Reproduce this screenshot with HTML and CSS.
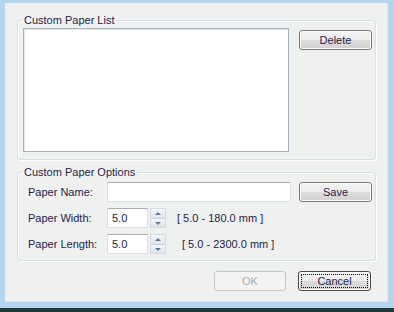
FILE: index.html
```html
<!DOCTYPE html>
<html lang="en">
<head>
    <meta charset="UTF-8">
    <meta name="viewport" content="width=device-width, initial-scale=1.0">
    <title>Custom Paper</title>
    <link rel="stylesheet" href="styles.css">
</head>
<body>

    <div class="window">
        <div class="dialog">

            <fieldset class="group">
                <legend>Custom Paper List</legend>
                <div class="list-row">
                    <div class="listbox"></div>
                    <button class="btn btn-delete">Delete</button>
                </div>
            </fieldset>

            <fieldset class="group group-options">
                <legend>Custom Paper Options</legend>
                <div class="options">
                    <div class="field-row">
                        <label class="field-label" for="paperName">Paper Name:</label>
                        <input type="text" id="paperName" class="text-input name-input">
                        <button class="btn btn-save">Save</button>
                    </div>
                    <div class="field-row">
                        <label class="field-label" for="paperWidth">Paper Width:</label>
                        <div class="spin-box">
                            <input type="text" id="paperWidth" class="text-input num-input" value="5.0">
                            <div class="spin">
                                <span class="spin-up"></span>
                                <span class="spin-down"></span>
                            </div>
                        </div>
                        <span class="range">[ 5.0 - 180.0 mm ]</span>
                    </div>
                    <div class="field-row">
                        <label class="field-label" for="paperLength">Paper Length:</label>
                        <div class="spin-box">
                            <input type="text" id="paperLength" class="text-input num-input" value="5.0">
                            <div class="spin">
                                <span class="spin-up"></span>
                                <span class="spin-down"></span>
                            </div>
                        </div>
                        <span class="range range-long">[ 5.0 - 2300.0 mm ]</span>
                    </div>
                </div>
            </fieldset>

            <div class="dialog-buttons">
                <button class="btn" disabled>OK</button>
                <button class="btn btn-default">Cancel</button>
            </div>

        </div>
    </div>

</body>
</html>
```

FILE: styles.css
```css
* {
    box-sizing: border-box;
}

body {
    margin: 0;
    padding: 0;
    width: 394px;
    height: 312px;
    overflow: hidden;
    font-family: "Liberation Sans", Arial, sans-serif;
    font-size: 11px;
    color: #1e2448;
    background-color: #b6d4ee;
}


.window {
    height: 312px;
    padding: 3px 6px 6px 5px;
    background-color: #b6d4ee;
    border-bottom: 4px solid #1e3a3b;
}

.dialog {
    height: 100%;
    padding: 11px 11px 0 12px;
    background-color: #eff0f0;
    border: 1px solid #dce8f2;
    border-width: 0 1px 1px 0;
}


.group {
    margin: 0;
    padding: 0;
    min-width: 0;
    border: 1px solid #d5dfe5;
    border-radius: 3px;
    box-shadow: inset 1px 1px 0 #fff, 1px 1px 0 #fff;
}

.group legend {
    margin-left: 4px;
    padding: 0 2px;
    line-height: 13px;
}

.list-row {
    display: flex;
    align-items: flex-start;
    gap: 10px;
    padding: 1px 0 7px 5px;
}

.listbox {
    width: 266px;
    height: 124px;
    background-color: #fff;
    border: 1px solid #a5b0bb;
    box-shadow: inset 1px 1px 0 #e4e8ec;
}


.btn {
    width: 73px;
    height: 20px;
    padding: 0;
    font-family: inherit;
    font-size: 11px;
    color: #1e2448;
    border: 1px solid #7a7a7a;
    border-radius: 3px;
    background: linear-gradient(#f4f4f4 0%, #ececec 48%, #dcdcdc 52%, #d2d2d2 100%);
    box-shadow: inset 0 0 0 1px #fbfbfb;
}

.btn-delete {
    margin-top: 2px;
}

.btn:disabled {
    width: 72px;
    color: #a9abad;
    border-color: #c3c7ca;
    background: #f4f4f4;
    box-shadow: none;
}

.btn-default {
    border-color: #4a4a4a;
    outline: 1px dotted #111;
    outline-offset: -4px;
}


.group-options {
    margin-top: 6px;
}

.options {
    display: flex;
    flex-direction: column;
    gap: 6px;
    padding: 3px 0 6px 10px;
}

.field-row {
    display: flex;
    align-items: center;
    height: 20px;
}

.field-label {
    width: 79px;
    flex: none;
}

.text-input {
    height: 20px;
    padding: 0 4px;
    font-family: inherit;
    font-size: 11px;
    color: #1e2448;
    background-color: #fff;
    border: 1px solid #dbdfe6;
    border-top-color: #abadb3;
    outline: none;
}

.name-input {
    width: 184px;
    margin-right: 8px;
}

.btn-save {
    margin-top: -1px;
}

.spin-box {
    display: flex;
    align-items: center;
    gap: 2px;
}

.num-input {
    width: 41px;
}

.spin {
    display: flex;
    flex-direction: column;
    width: 16px;
    height: 20px;
    border: 1px solid #d3dae1;
    background-color: #f5f7f9;
}

.spin span {
    position: relative;
    flex: 1;
    background: linear-gradient(#f6f8fa, #dde5ec);
}

.spin-up {
    border-bottom: 1px solid #c8d2dc;
}

.spin span::after {
    content: "";
    position: absolute;
    left: 4px;
    top: 3px;
    border-left: 3px solid transparent;
    border-right: 3px solid transparent;
}

.spin-up::after {
    border-bottom: 3px solid #5b7894;
}

.spin-down::after {
    border-top: 3px solid #5b7894;
}

.range {
    margin-left: 11px;
}

.range-long {
    margin-left: 16px;
}


.dialog-buttons {
    display: flex;
    justify-content: flex-end;
    gap: 12px;
    margin-top: 10px;
    padding-right: 5px;
}
```
